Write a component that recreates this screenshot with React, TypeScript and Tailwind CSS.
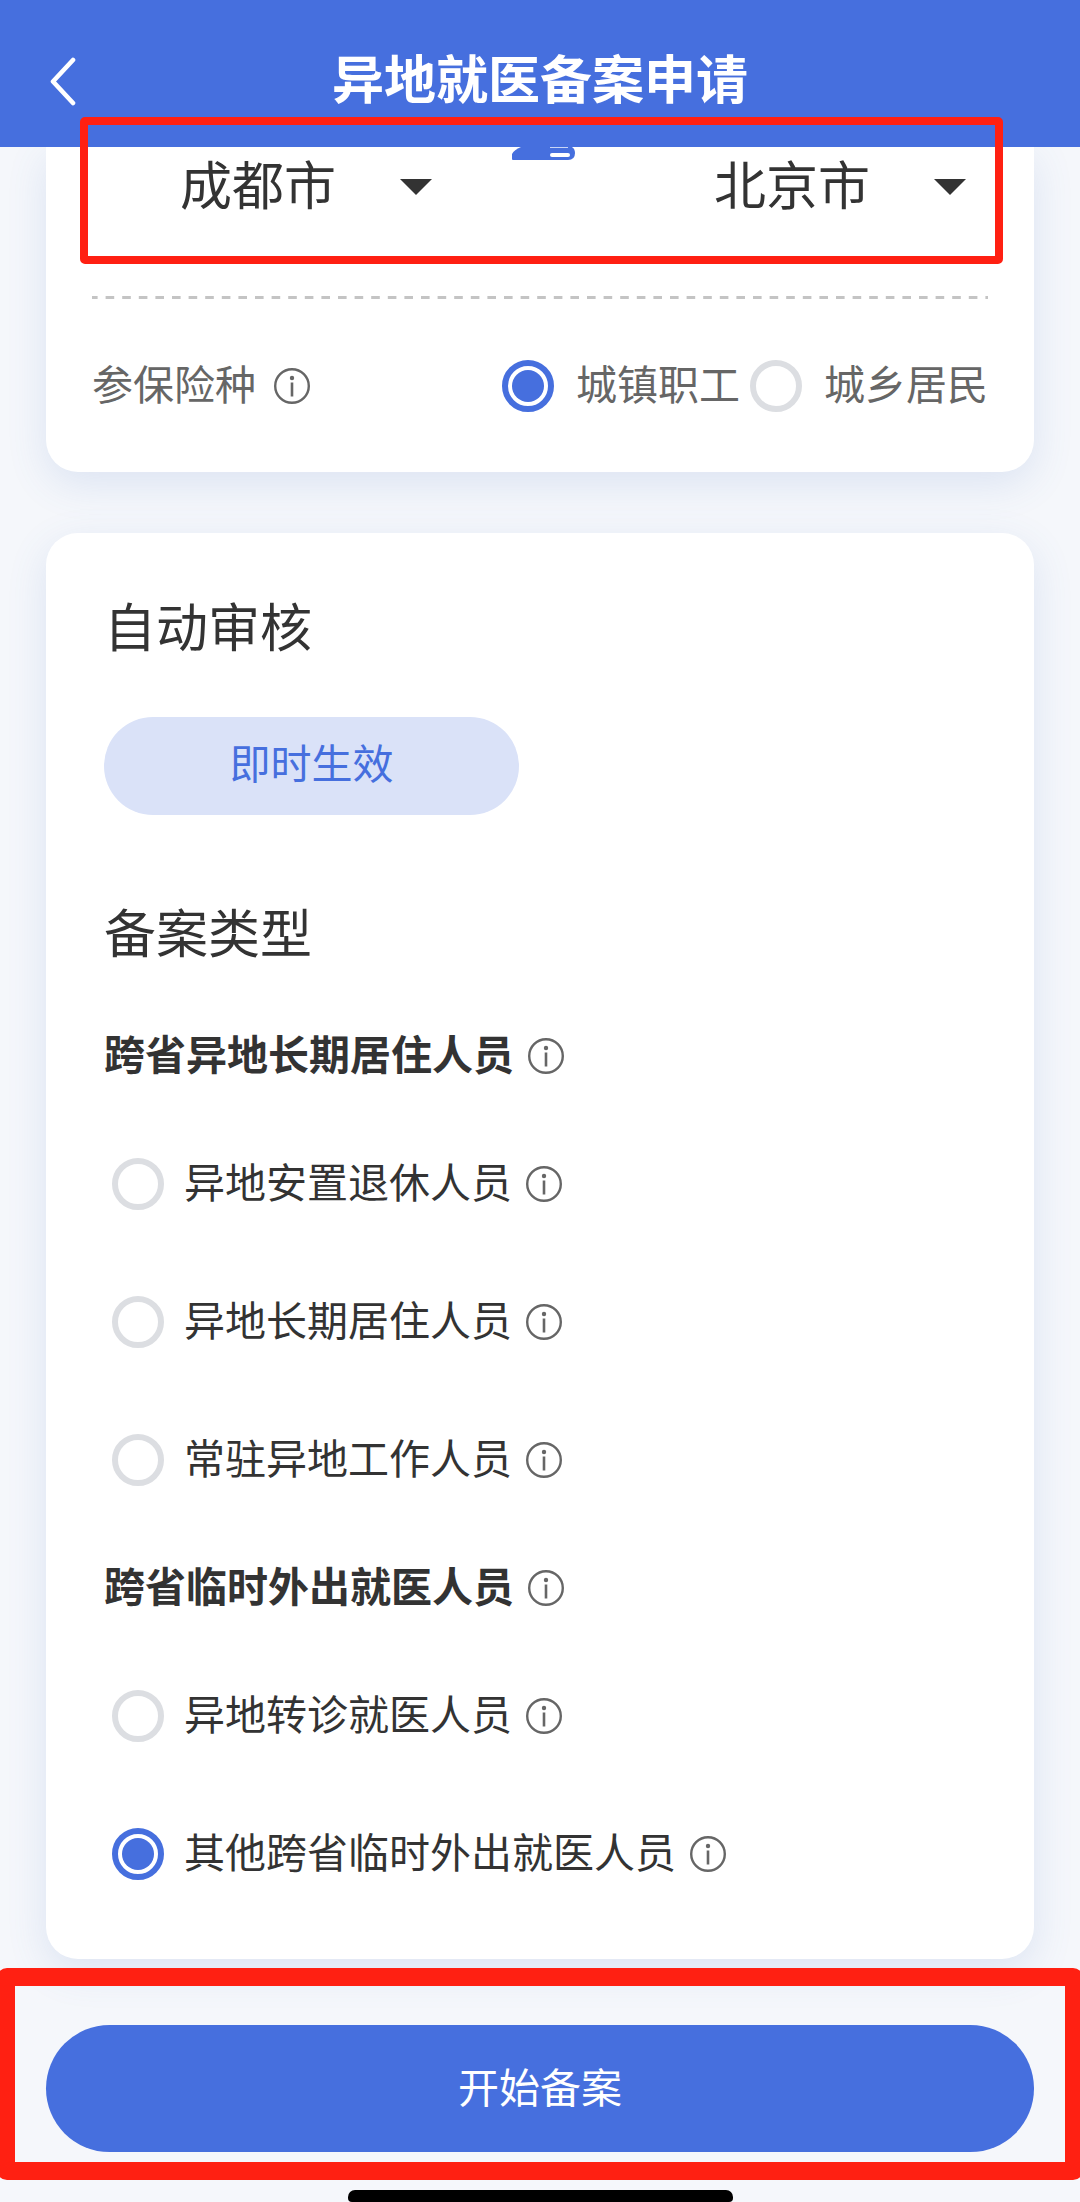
import { useState } from "react";

const ACCENT = "#466fde";

function Info({ label }: { label: string }) {
  return (
    <button type="button" aria-label={`${label}说明`} className="block shrink-0 text-[#666]">
      <svg viewBox="0 0 36 36" className="size-9" fill="none" stroke="currentColor" aria-hidden="true">
        <circle cx="18" cy="18" r="16.800" strokeWidth="2.400" />
        <circle cx="18" cy="10" r="2.200" fill="currentColor" stroke="none" />
        <path d="M18 14.500V28.500" strokeWidth="2.600" />
      </svg>
    </button>
  );
}

function Radio({ id, name, checked, onSelect }: { id: string; name: string; checked: boolean; onSelect: () => void }) {
  return (
    <span className="grid size-[52px] shrink-0 place-items-center">
      <input
        id={id}
        type="radio"
        name={name}
        checked={checked}
        onChange={onSelect}
        className="peer col-start-1 row-start-1 size-[52px] appearance-none rounded-full border-[6px] border-[#dcdee2] bg-white checked:border-[#466fde]"
      />
      <span className="pointer-events-none col-start-1 row-start-1 hidden size-8 rounded-full bg-[#466fde] peer-checked:block" />
    </span>
  );
}

function CitySelect({ label, value }: { label: string; value: string }) {
  return (
    <div className="grid w-[252px] items-center">
      <select
        aria-label={label}
        defaultValue={value}
        className="col-start-1 row-start-1 h-20 w-full appearance-none bg-transparent pb-2 text-[52px] leading-[72px] text-[#333]"
      >
        <option>{value}</option>
      </select>
      <svg viewBox="0 0 32 16" className="pointer-events-none col-start-1 row-start-1 h-4 w-8 justify-self-end" fill="#333" aria-hidden="true">
        <path d="M0 0H32L16 16Z" />
      </svg>
    </div>
  );
}

const groups = [
  {
    title: "跨省异地长期居住人员",
    items: ["异地安置退休人员", "异地长期居住人员", "常驻异地工作人员"],
  },
  {
    title: "跨省临时外出就医人员",
    items: ["异地转诊就医人员", "其他跨省临时外出就医人员"],
  },
];

export default function App() {
  const [insurance, setInsurance] = useState("城镇职工");
  const [kind, setKind] = useState("其他跨省临时外出就医人员");

  return (
    <div className="relative flex min-h-screen flex-col overflow-hidden bg-[#f5f7fb] font-['Noto_Sans_CJK_SC',sans-serif] text-[41px] leading-[60px] text-[#333]">
      <header className="grid h-[147px] grid-cols-[1fr_auto_1fr] items-center bg-[#466fde] px-[46px] pt-[14px] text-white">
        <button type="button" aria-label="返回" className="w-fit py-2">
          <svg viewBox="0 0 32 50" className="h-[50px] w-8" fill="none" stroke="currentColor" strokeWidth="4.600" strokeLinecap="round" strokeLinejoin="round" aria-hidden="true">
            <path d="M27 4L7 25.500L27 47" />
          </svg>
        </button>
        <h1 className="pb-2 text-[52px] leading-[76px] font-bold">异地就医备案申请</h1>
      </header>

      <main className="flex flex-col px-[46px]">
        <section className="rounded-b-[32px] bg-white px-[46px] shadow-[0_12px_40px_rgba(70,111,190,0.14)] [clip-path:inset(0_-46px_-61px_-46px)]">
          <div className="flex items-start pr-[22px] pl-[88px]">
            <CitySelect label="参保地" value="成都市" />
            <svg viewBox="0 0 64 16" className="ml-20 h-4 w-16" aria-hidden="true">
              <path d="M0 12V7Q2 3 9 0H60Q63 2 63 6Q63 13 56 13H1Q0 13 0 12Z" fill={ACCENT} />
              <path d="M38 0.500H56" stroke="#c9d6f7" strokeWidth="1" />
              <path d="M40 8H56" stroke="#fff" strokeWidth="4" strokeLinecap="round" />
            </svg>
            <div className="ml-auto">
              <CitySelect label="就医地" value="北京市" />
            </div>
          </div>
          <svg className="mt-[69px] block h-[3px] w-full" aria-hidden="true">
            <line x1="0" y1="1.500" x2="100%" y2="1.500" stroke="#c4c4c4" strokeWidth="3" strokeDasharray="8.600 8" strokeDashoffset="3" />
          </svg>
          <div role="radiogroup" aria-label="参保险种" className="flex h-[173px] items-center text-[#666]">
            <span className="pb-2">参保险种</span>
            <span className="ml-[18px] flex">
              <Info label="参保险种" />
            </span>
            <div className="ml-auto flex items-center gap-[10px]">
              {["城镇职工", "城乡居民"].map((name) => (
                <div key={name} className="flex items-center gap-[22px]">
                  <Radio id={name} name="insurance" checked={insurance === name} onSelect={() => setInsurance(name)} />
                  <label htmlFor={name} className="pb-2">
                    {name}
                  </label>
                </div>
              ))}
            </div>
          </div>
        </section>

        <section className="mt-[61px] flex flex-col rounded-[32px] bg-white px-[58px] pt-[54px] pb-[36px] shadow-[0_12px_40px_rgba(70,111,190,0.14)]">
          <h2 className="text-[52px] leading-[76px]">自动审核</h2>
          <button type="button" className="mt-[54px] h-[98px] w-[415px] rounded-full bg-[#dae2f8] pb-[10px] text-[#466fde]">
            即时生效
          </button>
          <h2 className="mt-[78px] text-[52px] leading-[76px]">备案类型</h2>
          <div className="mt-7 flex flex-col">
            {groups.map((group) => (
              <div key={group.title} role="radiogroup" aria-label={group.title} className="flex flex-col">
                <h3 className="flex h-[118px] items-center gap-[14px] font-bold">
                  <span className="pb-2">{group.title}</span>
                  <Info label={group.title} />
                </h3>
                {group.items.map((item) => (
                  <div key={item} className="flex h-[138px] items-center pl-2">
                    <Radio id={item} name="kind" checked={kind === item} onSelect={() => setKind(item)} />
                    <label htmlFor={item} className="ml-5 pb-2">
                      {item}
                    </label>
                    <span className="ml-[14px] flex">
                      <Info label={item} />
                    </span>
                  </div>
                ))}
              </div>
            ))}
          </div>
        </section>
      </main>

      <footer className="mt-[66px] flex flex-col items-center px-[46px]">
        <button type="button" className="h-[127px] w-full rounded-full bg-[#466fde] pb-2 text-white">
          开始备案
        </button>
        <div className="mt-[38px] h-3 w-[385px] rounded-t-[7px] rounded-b-[4px] bg-black" />
      </footer>

      <div className="pointer-events-none absolute top-[117px] right-[77px] left-20 z-20 h-[147px] rounded-[5px] border-8 border-[#ff2012]" />
      <div className="pointer-events-none absolute -right-[3px] bottom-[22px] -left-[3px] z-20 h-[212px] rounded-[10px] border-[18px] border-[#ff2012]" />
    </div>
  );
}
